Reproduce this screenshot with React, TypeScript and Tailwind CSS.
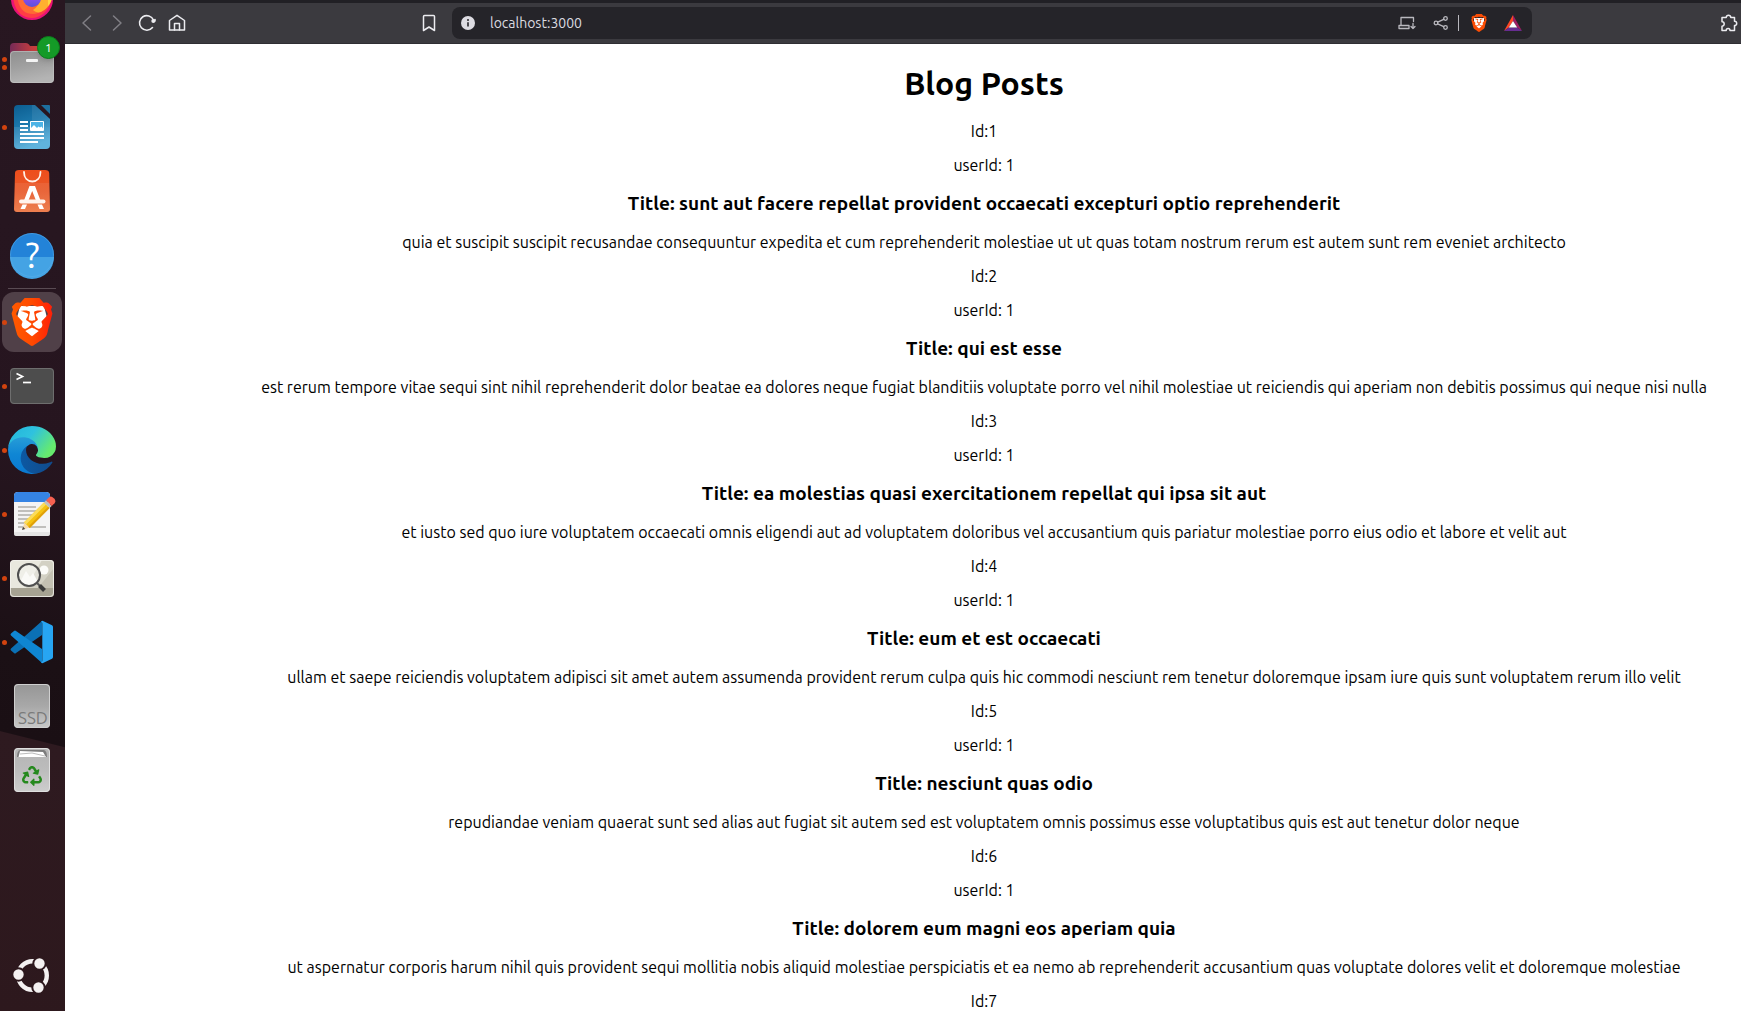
import React from 'react';
import type { ReactNode } from 'react';
import { SiBrave } from 'react-icons/si';
import { FaRecycle } from 'react-icons/fa';

type Post = { id: number; userId?: number; title?: string; body?: string };

const posts: Post[] = [
  {
    id: 1,
    userId: 1,
    title: 'sunt aut facere repellat provident occaecati excepturi optio reprehenderit',
    body: 'quia et suscipit suscipit recusandae consequuntur expedita et cum reprehenderit molestiae ut ut quas totam nostrum rerum est autem sunt rem eveniet architecto',
  },
  {
    id: 2,
    userId: 1,
    title: 'qui est esse',
    body: 'est rerum tempore vitae sequi sint nihil reprehenderit dolor beatae ea dolores neque fugiat blanditiis voluptate porro vel nihil molestiae ut reiciendis qui aperiam non debitis possimus qui neque nisi nulla',
  },
  {
    id: 3,
    userId: 1,
    title: 'ea molestias quasi exercitationem repellat qui ipsa sit aut',
    body: 'et iusto sed quo iure voluptatem occaecati omnis eligendi aut ad voluptatem doloribus vel accusantium quis pariatur molestiae porro eius odio et labore et velit aut',
  },
  {
    id: 4,
    userId: 1,
    title: 'eum et est occaecati',
    body: 'ullam et saepe reiciendis voluptatem adipisci sit amet autem assumenda provident rerum culpa quis hic commodi nesciunt rem tenetur doloremque ipsam iure quis sunt voluptatem rerum illo velit',
  },
  {
    id: 5,
    userId: 1,
    title: 'nesciunt quas odio',
    body: 'repudiandae veniam quaerat sunt sed alias aut fugiat sit autem sed est voluptatem omnis possimus esse voluptatibus quis est aut tenetur dolor neque',
  },
  {
    id: 6,
    userId: 1,
    title: 'dolorem eum magni eos aperiam quia',
    body: 'ut aspernatur corporis harum nihil quis provident sequi mollitia nobis aliquid molestiae perspiciatis et ea nemo ab reprehenderit accusantium quas voluptate dolores velit et doloremque molestiae',
  },
  { id: 7 },
];

function Icon({ children }: { children: ReactNode }) {
  return (
    <svg viewBox="0 0 64 64" className="block size-16" aria-hidden="true">
      {children}
    </svg>
  );
}

function Grad({ id, stops, x2 = 0, y2 = 1 }: { id: string; stops: string[]; x2?: number; y2?: number }) {
  return (
    <linearGradient id={id} x1="0" y1="0" x2={x2} y2={y2}>
      {stops.map((c, i) => (
        <stop key={i} offset={i / (stops.length - 1)} stopColor={c} />
      ))}
    </linearGradient>
  );
}

const FirefoxIcon = () => (
  <svg viewBox="0 0 42 42" className="block size-[42px]" aria-hidden="true">
    <Grad id="ffGlobe" stops={['#a04cf0', '#8a4bf0', '#5a52d8']} />
    <circle cx="21" cy="21" r="21" fill="#ea1277" />
    <path d="M2 18C3 34 12 40 21 40s19-8 20-22z" fill="#ff3d45" />
    <path d="M6 18C8 32 14 36 22 36s16-7 18-20L34 10z" fill="#ff6a35" />
    <path d="M30 14h11c1 9-4 17-11 20-3 1-6 0-8-2 6-4 9-10 8-18z" fill="#ffb12f" />
    <path d="M36 14h5c1 6-1 11-4 14 0-5 0-10-1-14z" fill="#ffd640" />
    <circle cx="21" cy="20" r="9" fill="url(#ffGlobe)" />
  </svg>
);

const FilesIcon = () => (
  <Icon>
    <Grad id="fBack" stops={['#752a57', '#c13c3f', '#e8602c']} x2={1} y2={0} />
    <Grad id="fFront" stops={['#8e8e8e', '#9f9f9f', '#b4b4b4']} x2={0.3} />
    <path d="M10 16q0-4 4-4h12q2 0 3 1.500l1 1.500h20q4 0 4 4v10H10z" fill="url(#fBack)" />
    <rect x="10" y="20" width="44" height="32" rx="4" fill="url(#fFront)" />
    <rect x="10.500" y="20.500" width="43" height="31" rx="3.500" fill="none" stroke="#c4c4c4" strokeOpacity=".6" />
    <rect x="26" y="28" width="12" height="3" rx="1" fill="#f4f4f4" />
  </Icon>
);

const WriterIcon = () => (
  <Icon>
    <Grad id="wr" stops={['#0c5d90', '#1c79ad', '#4fabd8']} x2={0.3} />
    <path d="M18 10h17l15 14v26q0 4-4 4H18q-4 0-4-4V14q0-4 4-4z" fill="url(#wr)" />
    <path d="M32 10h3l15 14v8H32z" fill="#fff" opacity=".08" />
    <path d="M14 32h36v18q0 4-4 4H18q-4 0-4-4z" fill="#fff" opacity=".1" />
    <path d="M41 10h8q1 0 1 1v8z" fill="#1d6f9f" />
    <g fill="#fff">
      <rect x="20" y="26" width="8" height="2" />
      <rect x="20" y="30" width="8" height="2" />
      <rect x="20" y="34" width="8" height="2" />
      <rect x="20" y="38" width="24" height="2" />
      <rect x="20" y="42" width="24" height="2" />
      <rect x="20" y="46" width="18" height="2" />
      <rect x="30" y="26" width="14" height="10" rx="1" />
    </g>
    <rect x="31" y="27" width="12" height="8" fill="#4db4e6" />
    <path d="M31 35v-2l3-3 3 3 1.500-1.500 1.500 1 1.500-1 1.500 2V35z" fill="#fff" />
  </Icon>
);

const SoftwareIcon = () => (
  <Icon>
    <Grad id="sw" stops={['#ee4d1b', '#e8592a', '#ec7440']} />
    <path d="M19 11h26q4 0 4.200 3L50 50q0 3-3 3H17q-3 0-3-3l1-36q0-3 4-3z" fill="url(#sw)" />
    <path d="M15 24h34l1 26q0 3-3 3H17q-3 0-3-3z" fill="#fff" opacity=".08" />
    <path d="M24 13c0 6 3.500 9.500 8.300 9.500S40.500 19 40.500 13" fill="none" stroke="#fff3ea" strokeWidth="1.800" strokeLinecap="round" />
    <path d="M29.500 27h5.500l5.300 14h-4.500L32.200 32l-3.600 9h-4.400z" fill="#fff" />
    <rect x="19" y="40.500" width="26.500" height="4" rx="2" fill="#fff3ec" />
    <path d="M22.500 45.500h4.500l-2 4.500h-4.500zM37.500 45.500H42l2 4.500h-4.500z" fill="#fff" />
  </Icon>
);

const HelpIcon = () => (
  <Icon>
    <circle cx="32" cy="32" r="22" fill="#2383d8" />
    <path d="M10 34a22 22 0 0 0 44 0z" fill="#44a3e4" />
    <circle cx="32" cy="32" r="21.500" fill="none" stroke="#5cb0ea" strokeOpacity=".5" />
    <text x="32.500" y="45" textAnchor="middle" fontSize="36" fill="#fff" fontFamily="Ubuntu, 'Noto Sans', sans-serif">
      ?
    </text>
  </Icon>
);

const BraveIcon = () => (
  <Icon>
    <Grad id="br" stops={['#ff5a00', '#ff4a00', '#ff1f08']} x2={1} y2={0} />
    <path d="M20 16h24l3 12-5 15-10 7-10-7-5-15z" fill="#fff" />
    <SiBrave x="8" y="8" size={48} fill="url(#br)" />
  </Icon>
);

const TerminalIcon = () => (
  <Icon>
    <rect x="10" y="14" width="44" height="36" rx="4" fill="#4d4d4d" />
    <rect x="10.500" y="14.500" width="43" height="35" rx="3.500" fill="none" stroke="#6e6e6e" />
    <path d="M16.500 19.500l6 3-6 3" fill="none" stroke="#fff" strokeWidth="1.700" />
    <path d="M23 28.500h8" stroke="#fff" strokeWidth="1.700" />
  </Icon>
);

const EdgeIcon = () => (
  <Icon>
    <Grad id="eA" stops={['#0c59a4', '#114a8b']} x2={1} y2={0} />
    <Grad id="eB" stops={['#2a9fd8', '#0f86d4', '#0a78d0']} />
    <Grad id="eC" stops={['#22b5dc', '#2fc2df', '#66eb6e']} x2={1} y2={0.5} />
    <g transform="translate(8 8) scale(.1875) translate(-4.630 -4.920)">
      <path
        d="M235.680 195.460a93.730 93.730 0 01-10.540 4.710 101.870 101.870 0 01-35.900 6.460c-47.320 0-88.540-32.550-88.540-74.320A31.480 31.480 0 01117.130 105c-42.800 1.800-53.800 46.400-53.800 72.530 0 73.880 68.090 81.370 82.760 81.370 7.910 0 19.840-2.300 27-4.560l1.310-.440a128.340 128.340 0 0066.600-52.800 4 4 0 00-5.320-5.640z"
        fill="url(#eA)"
      />
      <path
        d="M110.340 246.340A79.200 79.200 0 0187.600 225a80.720 80.720 0 0129.530-120c3.120-1.470 8.450-4.130 15.540-4a32.350 32.350 0 0125.690 13 31.880 31.880 0 016.360 18.660c0-.210 24.460-79.600-80-79.600-43.900 0-80 41.660-80 78.210a130.150 130.150 0 0012.110 56 128 128 0 00156.380 67.110 75.550 75.550 0 01-62.780-8z"
        fill="url(#eB)"
      />
      <path
        d="M156.940 153.780c-.810 1.050-3.300 2.500-3.300 5.660 0 2.610 1.700 5.120 4.720 7.230 14.380 10 41.490 8.680 41.560 8.680a59.560 59.560 0 0030.270-8.350 61.380 61.380 0 0030.430-52.880c.260-22.410-8-37.310-11.340-43.910-21.190-41.470-66.920-65.280-116.670-65.280a128 128 0 00-128 126.200c.480-36.540 36.800-66.050 80-66.050 3.500 0 23.460.340 42 10.070 16.340 8.580 24.900 18.940 30.850 29.210 6.180 10.670 7.280 24.150 7.280 29.520s-2.740 13.330-7.800 19.900z"
        fill="url(#eC)"
      />
    </g>
  </Icon>
);

const EditorIcon = () => (
  <Icon>
    <rect x="14" y="10" width="36" height="44" rx="4" fill="#f4f4f4" />
    <path d="M14 20v-6q0-4 4-4h28q4 0 4 4v6z" fill="#3584e4" />
    <rect x="14" y="50" width="36" height="4" rx="2" fill="#e4e4e4" />
    <g fill="#c0bfbc">
      <rect x="18" y="24" width="18" height="2" />
      <rect x="18" y="28" width="20" height="2" />
      <rect x="18" y="32" width="18" height="2" />
      <rect x="18" y="36" width="14" height="2" />
      <rect x="18" y="40" width="8" height="2" />
      <rect x="18" y="44" width="28" height="2" />
    </g>
    <g transform="translate(22 48) rotate(-45)">
      <path d="M0 0l8-4v8z" fill="#f5d9a8" />
      <path d="M0 0l3-1.500v3z" fill="#444" />
      <rect x="7" y="-4" width="28" height="8" fill="#f5c211" />
      <rect x="7" y="-4" width="28" height="3" fill="#fbdc5c" />
      <rect x="7" y="2" width="28" height="2" fill="#e0a00a" />
      <rect x="35" y="-4" width="3" height="8" fill="#c0bfbc" />
      <path d="M38-4h4q3 0 3 4t-3 4h-4z" fill="#f66151" />
    </g>
  </Icon>
);

const ViewerIcon = () => (
  <Icon>
    <rect x="10" y="14" width="44" height="37" rx="4" fill="#e9e8de" />
    <path d="M42 14h8q4 0 4 4v24H26z" fill="#d3d1c4" />
    <path d="M54 22v20H38z" fill="#c3c0b2" />
    <path d="M10 42h44v5q0 4-4 4H14q-4 0-4-4z" fill="#a6a292" />
    <rect x="10.500" y="14.500" width="43" height="36" rx="3.500" fill="none" stroke="#f4f3ee" strokeOpacity=".8" />
    <circle cx="44" cy="24" r="4.500" fill="#fbfbf8" />
    <path d="M20 36l6-11 4 6 3-4 5 9-4 4H24z" fill="#f8f8f4" />
    <circle cx="29" cy="29" r="11" fill="#fff" fillOpacity=".3" stroke="#4f4f4f" strokeWidth="2" />
    <path d="M37 37l3 3" stroke="#555" strokeWidth="2" />
    <path d="M39.500 39.500l5 5" stroke="#3a3a3a" strokeWidth="4" />
  </Icon>
);

const CodeIcon = () => (
  <Icon>
    <path d="M42 11v14L16 43q-1 1-2 0l-3-2.500q-1-1 0-2z" fill="#0b70b5" />
    <path d="M42 53V39L16 21q-1-1-2 0l-3 2.500q-1 1 0 2z" fill="#0f86d2" />
    <path d="M41 11.500q1-1 2-.500l9 4.200q1 .500 1 1.800v30q0 1.300-1 1.800l-9 4.200q-1 .500-2-.500 1.300 0 1.300-2V13.500q0-2-1.300-2z" fill="#27a5f2" />
  </Icon>
);

const DriveIcon = () => (
  <Icon>
    <Grad id="ssd" stops={['#969696', '#a8a8a8', '#c8c8c8']} />
    <rect x="14" y="10" width="36" height="44" rx="4" fill="url(#ssd)" />
    <rect x="14.500" y="10.500" width="35" height="43" rx="3.500" fill="none" stroke="#cfcfcf" />
    <text x="18" y="50" fontSize="17" fill="#7a7a7a" fontFamily="Ubuntu, 'Noto Sans', sans-serif">
      SSD
    </text>
  </Icon>
);

const TrashIcon = () => (
  <Icon>
    <Grad id="tr" stops={['#b4b4b4', '#bcbcbc', '#cdcdcd']} />
    <rect x="14" y="10" width="36" height="44" rx="4" fill="url(#tr)" />
    <rect x="14.500" y="10.500" width="35" height="43" rx="3.500" fill="none" stroke="#e0e0e0" />
    <path d="M20 12h24q3 1 3 7H17q0-6 3-7z" fill="#7c7c7c" />
    <path d="M20 13l23 1 3 5H18.500z" fill="#fff" />
    <path d="M20 16l12-1 13 3" fill="none" stroke="#bbb" />
    <FaRecycle x="22" y="28" size={20} fill="#26891e" />
  </Icon>
);

const UbuntuIcon = () => (
  <Icon>
    <circle cx="32.500" cy="31.500" r="14.300" fill="none" stroke="#f4f1f1" strokeWidth="4.400" />
    <g fill="#f4f1f1" stroke="#2d181d" strokeWidth="2">
      <circle cx="39.500" cy="19.500" r="6.200" />
      <circle cx="18.500" cy="30.500" r="6.200" />
      <circle cx="38.500" cy="43.500" r="6.200" />
    </g>
  </Icon>
);

function DockItem({ label, dots = 0, active, badge, children }: { label: string; dots?: number; active?: boolean; badge?: string; children: ReactNode }) {
  return (
    <button type="button" aria-label={label} className="relative h-16 w-full shrink-0">
      {active && <span className="absolute inset-y-0.5 left-0.5 w-[60px] rounded-xl bg-[#504048]" />}
      <span className="absolute inset-y-0 left-[2px] flex flex-col items-center justify-center gap-[3px]">
        {Array.from({ length: dots }, (_, i) => (
          <span key={i} className="size-[5px] rounded-full bg-[#d2430f]" />
        ))}
      </span>
      <span className="relative block">{children}</span>
      {badge && (
        <span className="absolute top-[5px] left-[37px] flex size-[23px] items-center justify-center rounded-full border border-[#0c7d1c] bg-[#149a27] text-xs text-white shadow-md">
          {badge}
        </span>
      )}
    </button>
  );
}

function Dock() {
  return (
    <nav
      aria-label="Dock"
      className="flex h-full w-[65px] shrink-0 flex-col overflow-hidden bg-[linear-gradient(194deg,#281721_0%,#26151f_45%,#1b1015_65%,#1a0f14_72.700%,#2e1a20_72.800%,#2d181d_100%)] pb-[3px]"
    >
      <button type="button" aria-label="Firefox" className="flex h-[31px] w-16 shrink-0 items-end justify-center pb-[11px]">
        <FirefoxIcon />
      </button>
      <DockItem label="Files" dots={2} badge="1"><FilesIcon /></DockItem>
      <DockItem label="Writer" dots={1}><WriterIcon /></DockItem>
      <DockItem label="Software"><SoftwareIcon /></DockItem>
      <DockItem label="Help"><HelpIcon /></DockItem>
      <div className="my-px ml-2 h-px w-12 shrink-0 bg-[#594b53]" />
      <DockItem label="Brave" dots={1} active><BraveIcon /></DockItem>
      <DockItem label="Terminal" dots={1}><TerminalIcon /></DockItem>
      <DockItem label="Edge" dots={1}><EdgeIcon /></DockItem>
      <DockItem label="Text Editor" dots={1}><EditorIcon /></DockItem>
      <DockItem label="Image Viewer" dots={1}><ViewerIcon /></DockItem>
      <DockItem label="Visual Studio Code" dots={1}><CodeIcon /></DockItem>
      <DockItem label="SSD drive"><DriveIcon /></DockItem>
      <DockItem label="Trash"><TrashIcon /></DockItem>
      <div className="mt-auto flex">
        <DockItem label="Show Applications"><UbuntuIcon /></DockItem>
      </div>
    </nav>
  );
}

function BarButton({ label, children, className = '' }: { label: string; children: ReactNode; className?: string }) {
  return (
    <button type="button" aria-label={label} className={`flex shrink-0 items-center justify-center ${className}`}>
      <svg viewBox="0 0 20 20" className="size-5" fill="none" stroke="currentColor" strokeWidth="1.500" strokeLinecap="round" strokeLinejoin="round">
        {children}
      </svg>
    </button>
  );
}

function Toolbar() {
  return (
    <header className="flex h-11 shrink-0 items-center border-t-[3px] border-b border-t-[#212025] border-b-[#2f2e33] bg-[#3b3a3f] text-[#ececf0]">
      <div className="flex pl-[7px]">
        <BarButton label="Back" className="w-[30px] text-[#807f85]"><path d="M13.500 3L6 10l7.500 7" /></BarButton>
        <BarButton label="Forward" className="w-[30px] text-[#807f85]"><path d="M6.500 3l7.500 7-7.500 7" /></BarButton>
        <BarButton label="Reload" className="w-[30px]">
          <path d="M15.500 14.500A7.300 7.300 0 1 1 16.500 7" strokeWidth="1.600" />
          <circle cx="16.300" cy="8" r="2" fill="currentColor" stroke="none" />
          <path d="M18 6.500V8" />
        </BarButton>
        <BarButton label="Home" className="w-[30px]">
          <path d="M2.500 7.500L10 2.300l7.500 5.200V17h-15z" />
          <path d="M7.500 17v-6.500h5V17" />
        </BarButton>
      </div>
      <div className="flex w-[260px] justify-end pr-[13px]">
        <BarButton label="Bookmark"><path d="M4.500 3.500q0-1 1-1h9q1 0 1 1v14L10 14l-5.500 3.500z" /></BarButton>
      </div>
      <div className="flex h-8 min-w-0 flex-1 items-center rounded-lg bg-[#252429] pr-0.5 pl-[9px]">
        <svg viewBox="0 0 14 14" className="size-[14px] shrink-0" aria-hidden="true">
          <circle cx="7" cy="7" r="7" fill="#dddce2" />
          <path d="M7 6.200v4.300" stroke="#252429" strokeWidth="1.600" />
          <circle cx="7" cy="3.900" r="1" fill="#252429" />
        </svg>
        <input
          aria-label="Address"
          defaultValue="localhost:3000"
          className="ml-[15px] min-w-0 flex-1 bg-transparent text-sm text-[#dcdbe0] outline-none"
        />
        <BarButton label="Install app" className="w-[34px] text-[#b9b8be]">
          <g strokeWidth="1.300">
            <path d="M4 12.500v-8h12.500v4M2 12.500h10v3H2z" />
            <path d="M16 10.500v5M14 13.500l2 2 2-2" />
          </g>
        </BarButton>
        <BarButton label="Share" className="w-[34px] text-[#b9b8be]">
          <g strokeWidth="1.300">
            <circle cx="5" cy="10" r="1.800" />
            <circle cx="14.500" cy="5.500" r="1.800" />
            <circle cx="14.500" cy="14.500" r="1.800" />
            <path d="M6.700 9.200l6-2.900M6.700 10.800l6 2.900" />
          </g>
        </BarButton>
        <span className="h-4 w-px bg-[#b9b8be]" />
        <button type="button" aria-label="Brave Shields" className="ml-[3px] flex w-[34px] shrink-0 justify-center">
          <svg viewBox="0 0 18 18" className="size-[18px]">
            <path d="M4 4h10v8l-5 4-5-4z" fill="#fff" />
            <SiBrave size={18} fill="#fb4d05" />
          </svg>
        </button>
        <button type="button" aria-label="Rewards" className="flex w-[34px] shrink-0 justify-center">
          <svg viewBox="0 0 18 16" className="h-4 w-[18px]">
            <path d="M9 0v6L4.800 12.500 0 16z" fill="#ff4724" />
            <path d="M9 0l9 16-4.800-3.500L9 6z" fill="#9e1f63" />
            <path d="M0 16l4.800-3.500h8.400L18 16z" fill="#662d91" />
            <path d="M9 6l4.200 6.500H4.800z" fill="#fff" />
          </svg>
        </button>
      </div>
      <div className="flex w-[209px] shrink-0 justify-end pr-0.5">
        <BarButton label="Extensions">
          <path d="M3 4.500h4.200a2.300 2.300 0 1 1 4.600 0H15.500v3.700a2.200 2.200 0 1 1 0 4.400v4.900H11a1.900 1.900 0 0 0-3.800 0H3v-4.300a2.200 2.200 0 0 0 0-4.400z" />
        </BarButton>
      </div>
    </header>
  );
}

export default function App() {
  return (
    <div className="flex h-screen overflow-hidden bg-white font-[Ubuntu,'Noto_Sans',sans-serif]">
      <Dock />
      <div className="flex min-w-0 flex-1 flex-col">
        <Toolbar />
        <main className="min-h-0 flex-1 overflow-hidden pt-[21px] pl-[162px] text-center text-base leading-[18px] text-black">
          <h1 className="mb-[21px] text-[32px] leading-9 font-bold">Blog Posts</h1>
          {posts.map((post) => (
            <article key={post.id} className="mb-4">
              <p>Id:{post.id}</p>
              {post.userId && <p className="mt-4">userId: {post.userId}</p>}
              {post.title && <h3 className="my-[19px] text-[19px] leading-[21px] font-bold">Title: {post.title}</h3>}
              {post.body && <p>{post.body}</p>}
            </article>
          ))}
        </main>
      </div>
    </div>
  );
}
